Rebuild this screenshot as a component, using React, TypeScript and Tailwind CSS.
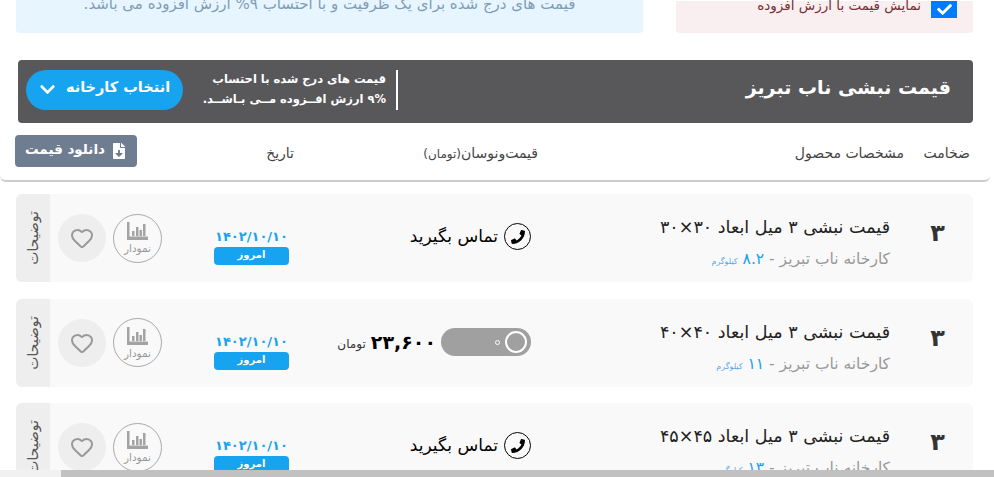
import { Heart } from "lucide-react";
import { FaCheck, FaChevronDown, FaFileDownload, FaPhone } from "react-icons/fa";

const rows = [
  { size: "۳۰×۳۰", weight: "۸.۲", price: null },
  { size: "۴۰×۴۰", weight: "۱۱", price: "۲۳,۶۰۰" },
  { size: "۴۵×۴۵", weight: "۱۳", price: null },
];

const ChartIcon = () => (
  <svg width="21" height="18" viewBox="0 0 21 18" fill="#a3a3a3">
    <path d="M0 0h2.5v14.5H21V18H0z" />
    <path d="M5 9h2.5v5H5zM9 5h2.5v9H9zM12.5 8H15v6h-2.5zM16 2h2.5v12H16z" />
  </svg>
);

const PriceRow = ({ size, weight, price }: { size: string; weight: string; price: string | null }) => (
  <div className="flex h-[88px] w-[957px] items-center rounded-md bg-[#f9f9f9] overflow-hidden">
    <div className="-mt-[10px] w-[83px] shrink-0 pl-3 text-center text-[24px] font-bold text-[#333]">۳</div>

    <div className="w-[359px] shrink-0 pt-[11px]">
      <div className="text-[17.5px] leading-7 text-[#222]">قیمت نبشی ۳ میل ابعاد {size}</div>
      <div className="mt-[6px] text-[15.5px] leading-6 text-[#999]">
        کارخانه ناب تبریز - <span className="text-[#16a3f0]">{weight}</span>{" "}
        <span className="text-[8px] text-[#5aa5f0]">کیلوگرم</span>
      </div>
    </div>

    <div className="w-[242px] shrink-0">
      {price ? (
        <div className="-mt-[1px] flex items-center gap-[5px]">
          <div className="flex h-7 w-[90px] items-center rounded-full bg-[#a0a0a0] pr-[4px]">
            <div className="size-[22px] rounded-full border-2 border-white" />
            <div className="mr-[5px] size-[5px] rounded-full border border-white" />
          </div>
          <span className="text-[19px] font-bold text-black">{price}</span>
          <span className="mt-1 text-[12px] text-[#333]">تومان</span>
        </div>
      ) : (
        <div className="-mt-[3px] flex items-center gap-1.5">
          <div className="flex size-[27px] items-center justify-center rounded-full border border-black">
            <FaPhone className="size-[14px] text-black" />
          </div>
          <span className="text-[17px] text-black">تماس بگیرید</span>
        </div>
      )}
    </div>

    <div className="mt-[16px] w-[75px] shrink-0">
      <div className="whitespace-nowrap text-center text-[13px] font-bold leading-5 text-[#16a3f0]" dir="ltr">
        ۱۴۰۲/۱۰/۱۰
      </div>
      <div className="h-[18px] rounded-sm bg-[#16a3f0] text-center text-[10px] font-bold leading-4 text-white">
        امروز
      </div>
    </div>

    <div className="mr-[52px] flex size-[49px] shrink-0 flex-col items-center justify-center rounded-full border border-[#a8a8a8]">
      <ChartIcon />
      <span className="mt-0.5 text-[10.5px] leading-3 text-[#999]">نمودار</span>
    </div>

    <div className="mr-[7px] flex size-[48px] shrink-0 items-center justify-center rounded-full bg-[#eee]">
      <Heart className="size-[24px] text-[#999]" strokeWidth={2} />
    </div>

    <div className="mr-2 flex h-full w-[34px] shrink-0 items-center justify-center bg-[#eee]">
      <span className="rotate-180 whitespace-nowrap text-[14px] text-[#555] [writing-mode:vertical-rl]">توضیحات</span>
    </div>
  </div>
);

export default function App() {
  return (
    <div
      dir="rtl"
      className="relative h-[477px] w-[994px] overflow-hidden bg-white font-['DejaVu_Sans','Noto_Sans',sans-serif]"
    >
      <div className="flex h-[33px] items-end pr-[21px]">
        <div className="flex h-[32px] w-[297px] items-start rounded-b-sm bg-[#f9eef0] pr-4">
          <div className="flex h-[17px] w-[26px] items-center justify-center bg-[#007bff]">
            <FaCheck className="size-[15px] text-white" />
          </div>
          <span className="mr-[10px] -mt-[6px] text-[13.5px] text-[#7a2e35]">نمایش قیمت با ارزش افزوده</span>
        </div>
        <div className="mr-[33px] flex h-[33px] w-[627px] justify-center rounded-b-sm bg-[#e6f5ff]">
          <span className="-mt-[6px] text-[15px] leading-5 text-[#7f9db3]">
            قیمت های درج شده برای یک ظرفیت و با احتساب ۹% ارزش افزوده می باشد.
          </span>
        </div>
      </div>

      <div className="mr-[4px] w-[990px] rounded-b-md border-b-2 border-[#ccc] pb-[13px]">
        <div className="mt-[27px] mr-[17px] flex h-[63px] w-[955px] items-center rounded-sm bg-[#58585a] pr-[22px] text-white">
          <h1 className="-mt-2 w-[553px] shrink-0 text-[19px] font-bold">قیمت نبشی ناب تبریز</h1>
          <div className="-mt-1 h-10 w-[2px] shrink-0 bg-white" />
          <p className="mr-[10px] -mt-[6px] w-[203px] shrink-0 whitespace-nowrap text-[11.5px] font-bold leading-5">
            قیمت های درج شده با احتساب
            <br />
            ۹% ارزش افــزوده مــی بـاشــد.
          </p>
          <button className="-mt-1 flex h-10 w-[157px] shrink-0 items-center justify-center gap-2.5 rounded-full bg-[#16a3f0] pb-1 text-[14.5px] font-bold">
            انتخاب کارخانه
            <FaChevronDown className="mt-1 size-[17px]" />
          </button>
        </div>

        <div className="mt-3 flex h-8 items-center pr-5 text-[14px] text-[#444]">
          <span className="w-[66px] shrink-0 pt-1">ضخامت</span>
          <span className="w-[366px] shrink-0 pt-1">مشخصات محصول</span>
          <span className="w-[244px] shrink-0 pt-1">
            قیمت‌ونوسان<span className="text-[12px]">(تومان)</span>
          </span>
          <span className="w-[157px] shrink-0 pt-1">تاریخ</span>
          <button className="flex h-8 w-[122px] shrink-0 items-center justify-center gap-1.5 rounded-sm bg-[#6f7d91] pb-1 text-[13.5px] font-bold text-white">
            <FaFileDownload className="mt-1 size-[16px]" />
            دانلود قیمت
          </button>
        </div>
      </div>

      <div className="mt-3 flex flex-col gap-[16.5px] pr-[21px]">
        {rows.map((row) => (
          <PriceRow key={row.size} {...row} />
        ))}
      </div>

      {/* horizontal page scrollbar */}
      <div className="absolute bottom-0 left-0 h-[7px] w-full bg-[#f1f1f1]">
        <div className="ml-auto h-full w-[933px] bg-[#c1c1c1]" />
      </div>
    </div>
  );
}
